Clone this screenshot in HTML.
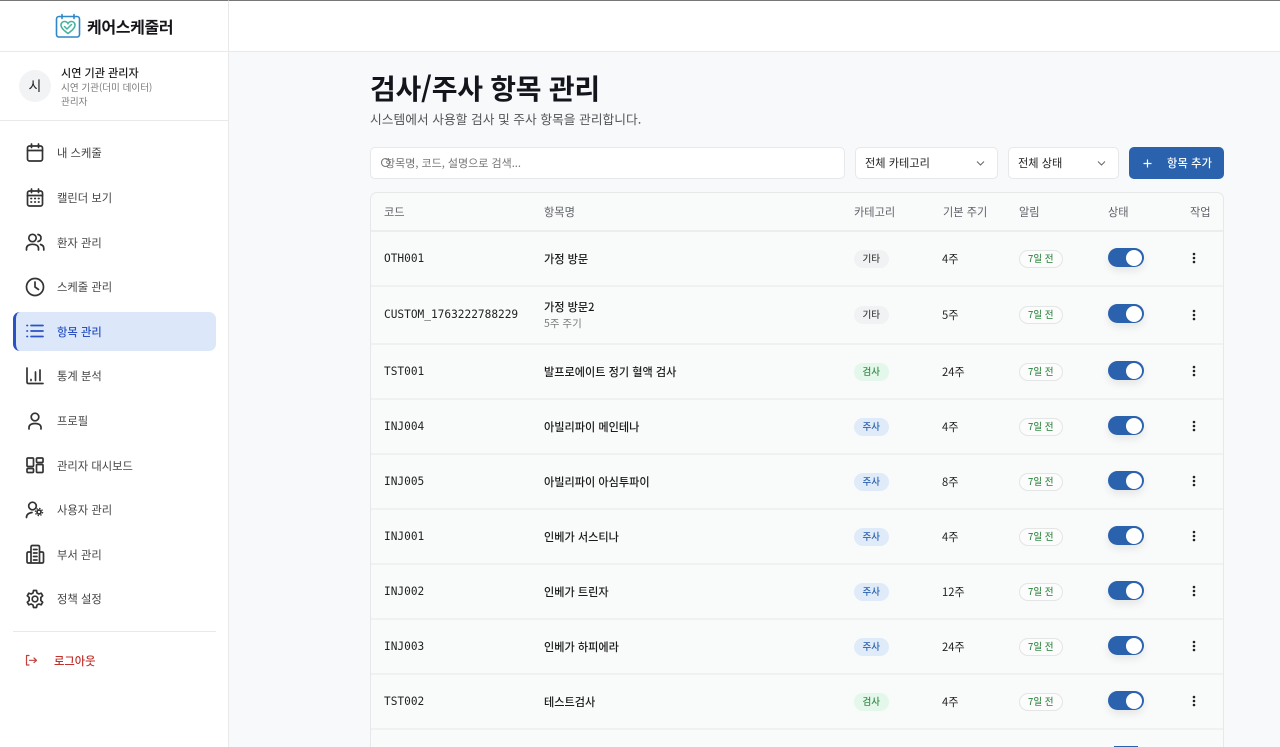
<!DOCTYPE html>
<html lang="ko"><head><meta charset="utf-8"><title>케어스케줄러</title>
<style>
*{box-sizing:border-box}
html,body{margin:0;padding:0;width:1280px;height:747px;overflow:hidden;background:#f8f9fa;color:#1a1a1f}
body{font-family:"Noto Sans CJK KR","Liberation Sans",sans-serif;position:relative}
.a{position:absolute;white-space:nowrap}
#top{left:0;top:0;width:1280px;height:52px;background:#fff;border-bottom:1px solid #e8e9eb;border-top:1px solid #777}
#side{left:0;top:0;width:229px;height:747px;background:#fff;border-right:1px solid #e8e9eb;z-index:2;border-top:1px solid #777}
.nav{font-size:11.3px;color:#444;left:57px;line-height:16px;z-index:3}
.ic{left:23px;z-index:3;fill:none;stroke:#333;stroke-width:1.7;stroke-linecap:round;stroke-linejoin:round}
.code{left:384px;font-family:"DejaVu Sans Mono",monospace;font-size:11.15px;color:#222;line-height:14px}
.name{left:544px;font-size:11.15px;font-weight:500;color:#1c1c1c;line-height:16px}
.sub{left:544px;font-size:10.5px;color:#7c7c7c;line-height:15px}
.cat{left:854px;width:34.5px;height:17.5px;border-radius:9px;font-size:9.5px;font-weight:500;line-height:17.5px;text-align:center}
.etc{background:#f1f2f3;color:#444}.tst{background:#e3f7ea;color:#3b8a4e}.inj{background:#e0ebfa;color:#2a62ad}
.per{left:942px;font-size:11.2px;color:#222;line-height:16px}
.al{left:1019px;width:43.5px;height:17.5px;border:1px solid #e3e6e4;border-radius:9px;font-size:9.5px;font-weight:500;color:#3f9150;line-height:15.5px;text-align:center;background:#fbfcfb}
.tg{left:1108px;width:35.5px;height:19px;border-radius:10px;background:#2a62ad;box-shadow:0 4px 8px rgba(0,0,0,.08)}
.tg:after{content:"";position:absolute;right:1.5px;top:1.5px;width:16px;height:16px;border-radius:50%;background:#fff}
.dot{left:1191px;width:6px;height:12px}
.th{font-size:11.2px;color:#5f6368;line-height:16px;top:204px}
.box{background:#fff;border:1px solid #e6e8ea;border-radius:5px}
.ln{left:371px;width:852px;height:2px;background:#f0f1f1}
</style></head><body>
<div class="a" id="top"></div>
<div class="a" id="side"></div>

<!-- logo -->
<svg class="a" style="left:55px;top:13px;z-index:3" width="26" height="26" viewBox="0 0 26 26" fill="none">
<rect x="1.5" y="3.5" width="23" height="20.5" rx="2.5" stroke="#2f86c9" stroke-width="1.6"/>
<path d="M7 1.5V5.5M19 1.5V5.5" stroke="#2f86c9" stroke-width="1.6" stroke-linecap="round"/>
<path d="M13 20.500C9 17.500 6 15 6 12C6 9.800 7.800 8.500 9.500 8.500C11 8.500 12.300 9.300 13 10.500C13.700 9.300 15 8.500 16.500 8.500C18.200 8.500 20 9.800 20 12C20 15 17 17.500 13 20.500Z" stroke="#45b39d" stroke-width="1.6"/>
<path d="M9.500 13.500L12 16L16.500 11.500" stroke="#45b39d" stroke-width="1.5" stroke-linecap="round"/>
</svg>
<div class="a" style="left:87px;top:15px;font-size:16px;font-weight:700;line-height:23px;z-index:3;color:#16161a;letter-spacing:-.35px">케어스케줄러</div>
<div class="a" style="left:0;top:51px;width:229px;height:1px;background:#e8e9eb;z-index:3"></div>

<!-- user -->
<div class="a" style="left:19px;top:70px;width:32px;height:32px;border-radius:50%;background:#f2f3f4;z-index:3;text-align:center;font-size:14px;line-height:32px;color:#222">시</div>
<div class="a" style="left:61px;top:65px;font-size:11.1px;font-weight:500;line-height:16px;z-index:3;color:#1c1c1c">시연 기관 관리자</div>
<div class="a" style="left:61px;top:80px;font-size:9.6px;line-height:14px;z-index:3;color:#7a7a7a">시연 기관(더미 데이터)</div>
<div class="a" style="left:61px;top:94px;font-size:9.6px;line-height:14px;z-index:3;color:#7a7a7a">관리자</div>
<div class="a" style="left:0;top:120px;width:229px;height:1px;background:#e8e9eb;z-index:3"></div>

<!-- active nav -->
<div class="a" style="left:13px;top:312px;width:203px;height:39px;border-radius:7px;background:#dce8fa;border-left:3px solid #2a52c4;z-index:2"></div>

<!-- nav icons -->
<svg class="a ic" style="top:141px" width="24" height="24" viewBox="0 0 24 24"><rect x="4.500" y="5" width="15" height="15" rx="2"/><path d="M4.500 9.500H19.500M8.500 3V6.500M15.500 3V6.500"/></svg>
<svg class="a ic" style="top:186px" width="24" height="24" viewBox="0 0 24 24"><rect x="4.500" y="5" width="15" height="15" rx="2"/><path d="M4.500 9.500H19.500M8.500 3V6.500M15.500 3V6.500"/><path d="M8 12.500H8.500M11.800 12.500H12.300M15.500 12.500H16M8 16H8.500M11.800 16H12.300M15.500 16H16" stroke-width="1.800"/></svg>
<svg class="a ic" style="top:230px" width="24" height="24" viewBox="0 0 24 24"><circle cx="9.500" cy="8" r="3.700"/><path d="M3.500 20V18.500C3.500 15.800 6 14.300 9.500 14.300C13 14.300 15.500 15.800 15.500 18.500V20M15 4.500C17 4.900 18 6.300 18 8C18 9.700 17 11 15 11.500M17.500 14.500C19.500 15 20.800 16.500 20.800 18.500V20"/></svg>
<svg class="a ic" style="top:275px" width="24" height="24" viewBox="0 0 24 24"><circle cx="12" cy="12" r="8.500"/><path d="M12 7V12L15.500 14.500"/></svg>
<svg class="a ic" style="top:319px;stroke:#2a52c4" width="24" height="24" viewBox="0 0 24 24"><path d="M8 6.500H20M8 12H20M8 17.500H20" /><path d="M4 6.500H4.400M4 12H4.400M4 17.500H4.400" stroke-width="1.800"/></svg>
<svg class="a ic" style="top:364px" width="24" height="24" viewBox="0 0 24 24"><path d="M4 4V18C4 18.800 4.500 19.500 5.500 19.500H20M8 15.500V16.500M12.500 8V16.500M17 6V16.500"/></svg>
<svg class="a ic" style="top:409px" width="24" height="24" viewBox="0 0 24 24"><circle cx="12" cy="8" r="3.800"/><path d="M6 20V18.500C6 15.800 8.500 14.500 12 14.500C15.500 14.500 18 15.800 18 18.500V20"/></svg>
<svg class="a ic" style="top:453px" width="24" height="24" viewBox="0 0 24 24"><rect x="4" y="5" width="6.500" height="8.500" rx="1"/><rect x="13.500" y="5" width="6.500" height="4.500" rx="1"/><rect x="13.500" y="11.500" width="6.500" height="8" rx="1"/><rect x="4" y="15.500" width="6.500" height="4" rx="1"/></svg>
<svg class="a ic" style="top:498px" width="24" height="24" viewBox="0 0 24 24"><circle cx="9.500" cy="8" r="3.800"/><path d="M3.500 19.500C3.500 16.500 5.500 15 9 14.500"/><circle cx="16" cy="14" r="2"/><circle cx="16" cy="14" r="3.600" stroke-width="1.300" stroke-dasharray="1.400 1.430" stroke-linecap="butt"/></svg>
<svg class="a ic" style="top:542px" width="24" height="24" viewBox="0 0 24 24"><path d="M8 21V5C8 4 8.700 3.500 9.500 3.500H15C15.800 3.500 16.500 4 16.500 5V21M8 10H5.500C4.500 10 4 10.700 4 11.500V19.500C4 20.500 4.500 21 5.500 21H19C20 21 20.500 20.500 20.500 19.500V11.500C20.500 10.700 20 10 19 10H16.500M10.500 7.500H14M10.500 11H14M10.500 14.500H14M10.500 18H14"/></svg>
<svg class="a ic" style="top:587px" width="24" height="24" viewBox="0 0 24 24"><circle cx="12" cy="12" r="2.800"/><path d="M10.500 3.500H13.500L14 6C14.700 6.300 15.300 6.600 15.800 7L18.200 6.200L19.700 8.800L17.800 10.500C17.900 11.200 17.900 12.800 17.800 13.500L19.700 15.200L18.200 17.800L15.800 17C15.300 17.400 14.700 17.700 14 18L13.500 20.500H10.500L10 18C9.300 17.700 8.700 17.400 8.200 17L5.800 17.800L4.300 15.200L6.200 13.500C6.100 12.800 6.100 11.200 6.200 10.500L4.300 8.800L5.800 6.200L8.200 7C8.700 6.600 9.300 6.300 10 6Z"/></svg>

<div class="a nav" style="top:145px">내 스케줄</div>
<div class="a nav" style="top:190px">캘린더 보기</div>
<div class="a nav" style="top:235px">환자 관리</div>
<div class="a nav" style="top:279px">스케줄 관리</div>
<div class="a nav" style="top:324px;color:#2a52c4;font-weight:500">항목 관리</div>
<div class="a nav" style="top:368px">통계 분석</div>
<div class="a nav" style="top:413px">프로필</div>
<div class="a nav" style="top:458px">관리자 대시보드</div>
<div class="a nav" style="top:502px">사용자 관리</div>
<div class="a nav" style="top:547px">부서 관리</div>
<div class="a nav" style="top:591px">정책 설정</div>
<div class="a" style="left:13px;top:631px;width:203px;height:1px;background:#e8e9eb;z-index:3"></div>
<svg class="a" style="left:25px;top:654px;z-index:3" width="14" height="13" viewBox="0 0 14 13" fill="none" stroke="#c0423c" stroke-width="1.200" stroke-linecap="round" stroke-linejoin="round"><path d="M4 1.500H1.500V11H4M4.500 6.300H11.500M9 4L11.500 6.300L9 8.600"/></svg>
<div class="a nav" style="left:54px;top:653px;color:#c0322c;font-weight:500">로그아웃</div>

<!-- header -->
<div class="a" style="left:370px;top:67px;font-size:28px;font-weight:700;line-height:42px;color:#14141c;letter-spacing:-.25px">검사/주사 항목 관리</div>
<div class="a" style="left:370px;top:109px;font-size:12.75px;line-height:19px;color:#555">시스템에서 사용할 검사 및 주사 항목을 관리합니다.</div>

<!-- toolbar -->
<div class="a box" style="left:370px;top:147px;width:475px;height:32px"></div>
<svg class="a" style="left:380px;top:157px" width="11" height="12" viewBox="0 0 11 12" fill="none" stroke="#777" stroke-width="1.100"><circle cx="5.500" cy="5.500" r="4"/></svg>
<div class="a" style="left:385px;top:155px;font-size:11px;line-height:16px;color:#757575">항목명, 코드, 설명으로 검색...</div>
<div class="a box" style="left:855px;top:147px;width:143px;height:32px"></div>
<div class="a" style="left:865px;top:155px;font-size:11.2px;line-height:16px;color:#222">전체 카테고리</div>
<svg class="a" style="left:976px;top:160px" width="10" height="7" viewBox="0 0 10 7" fill="none" stroke="#666" stroke-width="1"><path d="M1 1.500L4.500 5L8 1.500"/></svg>
<div class="a box" style="left:1008px;top:147px;width:111px;height:32px"></div>
<div class="a" style="left:1018px;top:155px;font-size:11.2px;line-height:16px;color:#222">전체 상태</div>
<svg class="a" style="left:1097px;top:160px" width="10" height="7" viewBox="0 0 10 7" fill="none" stroke="#666" stroke-width="1"><path d="M1 1.500L4.500 5L8 1.500"/></svg>
<div class="a" style="left:1129px;top:147px;width:95px;height:32px;background:#2a62ad;border-radius:5px"></div>
<svg class="a" style="left:1142px;top:158px" width="11" height="11" viewBox="0 0 11 11" fill="none" stroke="#fff" stroke-width="1.200"><path d="M5.500 1.500V9.500M1.500 5.500H9.500"/></svg>
<div class="a" style="left:1167px;top:155px;font-size:11.2px;font-weight:500;line-height:16px;color:#fff;letter-spacing:.15px">항목 추가</div>

<!-- table -->
<div class="a" style="left:370px;top:192px;width:854px;height:555px;border:1px solid #e6e8ea;border-bottom:0;border-radius:7px 7px 0 0;background:#f9fafa"></div>
<div class="a ln" style="top:230px;background:#eceded"></div>
<div class="a th" style="left:384px">코드</div>
<div class="a th" style="left:544px">항목명</div>
<div class="a th" style="left:854px">카테고리</div>
<div class="a th" style="left:943px">기본 주기</div>
<div class="a th" style="left:1019px">알림</div>
<div class="a th" style="left:1108px">상태</div>
<div class="a th" style="left:1190px">작업</div>

<!-- row lines -->
<div class="a ln" style="top:285px"></div>
<div class="a ln" style="top:343px"></div>
<div class="a ln" style="top:398px"></div>
<div class="a ln" style="top:453px"></div>
<div class="a ln" style="top:508px"></div>
<div class="a ln" style="top:563px"></div>
<div class="a ln" style="top:618px"></div>
<div class="a ln" style="top:673px"></div>
<div class="a ln" style="top:728px"></div>

<!-- row 1 -->
<div class="a code" style="top:252px">OTH001</div><div class="a name" style="top:251px">가정 방문</div><div class="a cat etc" style="top:250px">기타</div><div class="a per" style="top:251px">4주</div><div class="a al" style="top:250px">7일 전</div><div class="a tg" style="top:248px"></div>
<svg class="a dot" style="top:252px" viewBox="0 0 6 12"><circle cx="3" cy="2" r="1.300" fill="#222"/><circle cx="3" cy="6" r="1.300" fill="#222"/><circle cx="3" cy="10" r="1.300" fill="#222"/></svg>
<!-- row 2 -->
<div class="a code" style="top:308px">CUSTOM_1763222788229</div><div class="a name" style="top:299px">가정 방문2</div><div class="a sub" style="top:316px">5주 주기</div><div class="a cat etc" style="top:306px">기타</div><div class="a per" style="top:307px">5주</div><div class="a al" style="top:306px">7일 전</div><div class="a tg" style="top:304px"></div>
<svg class="a dot" style="top:309px" viewBox="0 0 6 12"><circle cx="3" cy="2" r="1.300" fill="#222"/><circle cx="3" cy="6" r="1.300" fill="#222"/><circle cx="3" cy="10" r="1.300" fill="#222"/></svg>
<!-- row 3 -->
<div class="a code" style="top:365px">TST001</div><div class="a name" style="top:364px">발프로에이트 정기 혈액 검사</div><div class="a cat tst" style="top:363px">검사</div><div class="a per" style="top:364px">24주</div><div class="a al" style="top:363px">7일 전</div><div class="a tg" style="top:361px"></div>
<svg class="a dot" style="top:365px" viewBox="0 0 6 12"><circle cx="3" cy="2" r="1.300" fill="#222"/><circle cx="3" cy="6" r="1.300" fill="#222"/><circle cx="3" cy="10" r="1.300" fill="#222"/></svg>
<!-- row 4 -->
<div class="a code" style="top:420px">INJ004</div><div class="a name" style="top:419px">아빌리파이 메인테나</div><div class="a cat inj" style="top:418px">주사</div><div class="a per" style="top:419px">4주</div><div class="a al" style="top:418px">7일 전</div><div class="a tg" style="top:416px"></div>
<svg class="a dot" style="top:420px" viewBox="0 0 6 12"><circle cx="3" cy="2" r="1.300" fill="#222"/><circle cx="3" cy="6" r="1.300" fill="#222"/><circle cx="3" cy="10" r="1.300" fill="#222"/></svg>
<!-- row 5 -->
<div class="a code" style="top:475px">INJ005</div><div class="a name" style="top:474px">아빌리파이 아심투파이</div><div class="a cat inj" style="top:473px">주사</div><div class="a per" style="top:474px">8주</div><div class="a al" style="top:473px">7일 전</div><div class="a tg" style="top:471px"></div>
<svg class="a dot" style="top:475px" viewBox="0 0 6 12"><circle cx="3" cy="2" r="1.300" fill="#222"/><circle cx="3" cy="6" r="1.300" fill="#222"/><circle cx="3" cy="10" r="1.300" fill="#222"/></svg>
<!-- row 6 -->
<div class="a code" style="top:530px">INJ001</div><div class="a name" style="top:529px">인베가 서스티나</div><div class="a cat inj" style="top:528px">주사</div><div class="a per" style="top:529px">4주</div><div class="a al" style="top:528px">7일 전</div><div class="a tg" style="top:526px"></div>
<svg class="a dot" style="top:530px" viewBox="0 0 6 12"><circle cx="3" cy="2" r="1.300" fill="#222"/><circle cx="3" cy="6" r="1.300" fill="#222"/><circle cx="3" cy="10" r="1.300" fill="#222"/></svg>
<!-- row 7 -->
<div class="a code" style="top:585px">INJ002</div><div class="a name" style="top:584px">인베가 트린자</div><div class="a cat inj" style="top:583px">주사</div><div class="a per" style="top:584px">12주</div><div class="a al" style="top:583px">7일 전</div><div class="a tg" style="top:581px"></div>
<svg class="a dot" style="top:585px" viewBox="0 0 6 12"><circle cx="3" cy="2" r="1.300" fill="#222"/><circle cx="3" cy="6" r="1.300" fill="#222"/><circle cx="3" cy="10" r="1.300" fill="#222"/></svg>
<!-- row 8 -->
<div class="a code" style="top:640px">INJ003</div><div class="a name" style="top:639px">인베가 하피에라</div><div class="a cat inj" style="top:638px">주사</div><div class="a per" style="top:639px">24주</div><div class="a al" style="top:638px">7일 전</div><div class="a tg" style="top:636px"></div>
<svg class="a dot" style="top:640px" viewBox="0 0 6 12"><circle cx="3" cy="2" r="1.300" fill="#222"/><circle cx="3" cy="6" r="1.300" fill="#222"/><circle cx="3" cy="10" r="1.300" fill="#222"/></svg>
<!-- row 9 -->
<div class="a code" style="top:695px">TST002</div><div class="a name" style="top:694px">테스트검사</div><div class="a cat tst" style="top:693px">검사</div><div class="a per" style="top:694px">4주</div><div class="a al" style="top:693px">7일 전</div><div class="a tg" style="top:691px"></div>
<svg class="a dot" style="top:695px" viewBox="0 0 6 12"><circle cx="3" cy="2" r="1.300" fill="#222"/><circle cx="3" cy="6" r="1.300" fill="#222"/><circle cx="3" cy="10" r="1.300" fill="#222"/></svg>
<!-- row 10 partial -->
<div class="a" style="left:1114px;top:746px;width:24px;height:1px;background:#2a62ad"></div>
</body></html>
